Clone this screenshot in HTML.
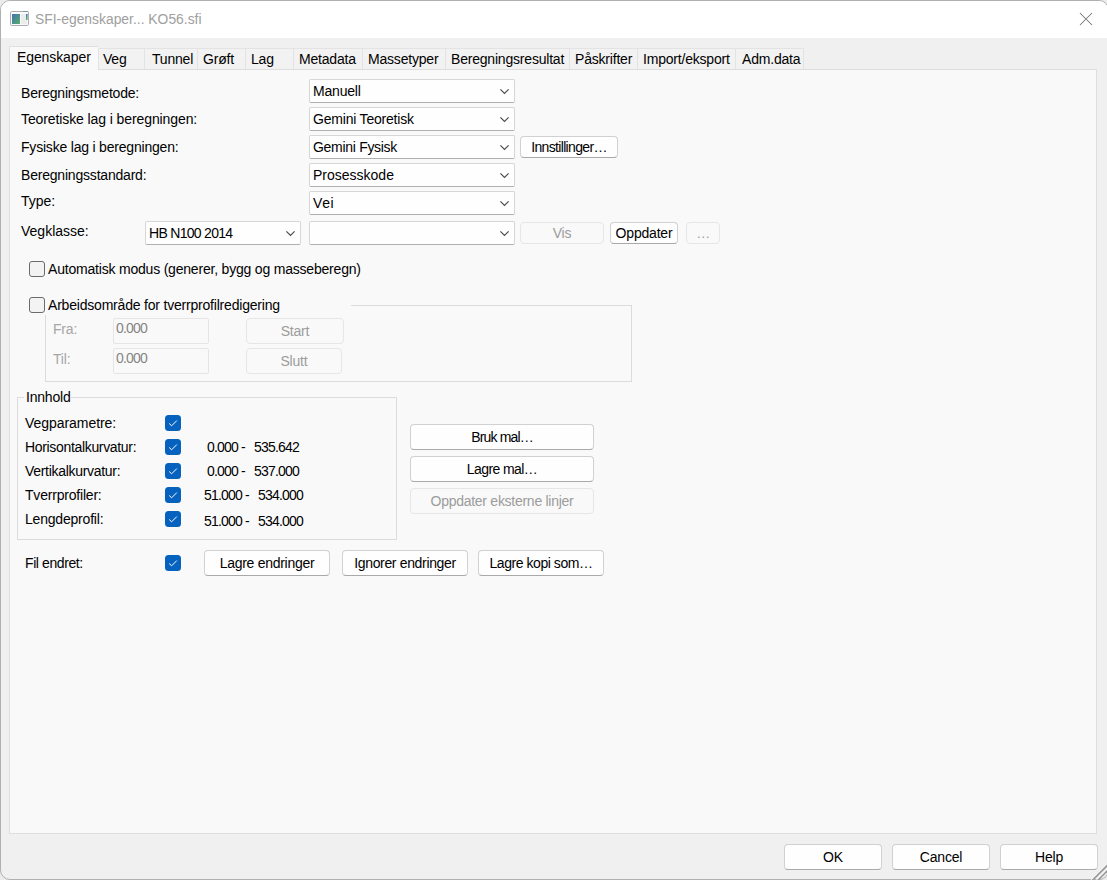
<!DOCTYPE html>
<html><head><meta charset="utf-8">
<style>
html,body{margin:0;padding:0;width:1107px;height:880px;overflow:hidden;background:#ececec;}
*{box-sizing:border-box;}
.win{position:absolute;left:0;top:0;width:1109px;height:880px;background:#f0f0f0;border:1px solid #b0b0b0;border-radius:10px;overflow:hidden;}
.tb{position:absolute;left:0;top:0;width:1109px;height:37px;background:#fff;}
.a{position:absolute;}
.t{position:absolute;font-family:"Liberation Sans",sans-serif;font-size:14px;line-height:16px;letter-spacing:-0.2px;white-space:nowrap;color:#000;}
.g{color:#9c9c9c;}
.panel{position:absolute;left:9px;top:69px;width:1088px;height:765px;background:#f9f9f9;border:1px solid #dedede;}
.tab{position:absolute;top:48px;height:21px;background:#f2f2f2;border:1px solid #e3e3e3;border-bottom:none;}
.seltab{position:absolute;left:9px;top:46px;width:89px;height:24px;background:#f9f9f9;border:1px solid #e0e0e0;border-right:none;border-bottom:none;}
.combo{position:absolute;height:24px;background:#fefefe;border:1px solid #d6d6d6;border-bottom-color:#b0b0b0;border-radius:2px;}
.chev{position:absolute;width:10px;height:6px;}
.btn{position:absolute;background:#fefefe;border:1px solid #d1d1d1;border-bottom-color:#a9a9a9;border-radius:4px;}
.btnd{position:absolute;background:#f9f9f9;border:1px solid #e6e6e6;border-radius:4px;}
.cb{position:absolute;width:16px;height:16px;border:1px solid #6b6b6b;border-radius:3px;background:#f3f3f3;}
.cbc{position:absolute;width:16px;height:16px;border-radius:3px;background:#0a5fc2;}
.edit{position:absolute;background:#f9f9f9;border:1px solid #e5e5e5;border-radius:2px;}
.gl{position:absolute;background:#dcdcdc;}
</style></head><body>
<div class="win">
  <div class="tb"></div>
</div>

<!-- title bar -->
<svg class="a" style="left:10px;top:11px" width="19" height="15" viewBox="0 0 19 15">
  <defs><linearGradient id="ig" x1="0" y1="0" x2="1" y2="1"><stop offset="0" stop-color="#4670b2"/><stop offset="0.5" stop-color="#4b8f90"/><stop offset="1" stop-color="#5bb066"/></linearGradient>
  <linearGradient id="ib" x1="0" y1="0" x2="0" y2="1"><stop offset="0" stop-color="#4a72b8"/><stop offset="1" stop-color="#62b46a"/></linearGradient></defs>
  <rect x="0.5" y="0.5" width="18" height="14" rx="1.2" fill="#fafafa" stroke="#a9aeb5"/>
  <rect x="13" y="0" width="5" height="1" fill="#8a9099"/>
  <rect x="2" y="3" width="8" height="10" fill="url(#ig)"/>
  <rect x="11" y="3" width="6" height="10" fill="#ececec"/>
  <rect x="16" y="3" width="1.6" height="6" fill="url(#ib)"/>
</svg>
<div class="t" style="left:35px;top:11px;font-size:15.5px;letter-spacing:0;color:#a0a0a0;transform:scaleX(0.895);transform-origin:0 0">SFI-egenskaper... KO56.sfi</div>
<svg class="a" style="left:1079px;top:12px" width="14" height="14" viewBox="0 0 14 14">
  <path d="M1 1L13 13M13 1L1 13" stroke="#777777" stroke-width="1.05"/>
</svg>

<!-- tabs -->
<div class="panel"></div>
<div class="tab" style="left:98px;width:47px"></div>
<div class="tab" style="left:144px;width:54px"></div>
<div class="tab" style="left:197px;width:49px"></div>
<div class="tab" style="left:245px;width:49px"></div>
<div class="tab" style="left:293px;width:70px"></div>
<div class="tab" style="left:362px;width:84px"></div>
<div class="tab" style="left:445px;width:125px"></div>
<div class="tab" style="left:569px;width:69px"></div>
<div class="tab" style="left:637px;width:99px"></div>
<div class="tab" style="left:735px;width:69px"></div>
<div class="seltab"></div>
<div class="t" style="left:17px;top:49px;letter-spacing:-0.1px">Egenskaper</div>
<div class="t" style="left:103px;top:51px">Veg</div>
<div class="t" style="left:152px;top:51px">Tunnel</div>
<div class="t" style="left:203px;top:51px">Grøft</div>
<div class="t" style="left:251px;top:51px">Lag</div>
<div class="t" style="left:299px;top:51px">Metadata</div>
<div class="t" style="left:368px;top:51px">Massetyper</div>
<div class="t" style="left:451px;top:51px">Beregningsresultat</div>
<div class="t" style="left:575px;top:51px">Påskrifter</div>
<div class="t" style="left:643px;top:51px">Import/eksport</div>
<div class="t" style="left:742px;top:51px">Adm.data</div>

<div class="t" style="left:21px;top:85px">Beregningsmetode:</div>
<div class="t" style="left:21px;top:111px;letter-spacing:-0.1px">Teoretiske lag i beregningen:</div>
<div class="t" style="left:21px;top:139px">Fysiske lag i beregningen:</div>
<div class="t" style="left:21px;top:167px">Beregningsstandard:</div>
<div class="t" style="left:21px;top:193px;letter-spacing:0px">Type:</div>
<div class="t" style="left:21px;top:223px;letter-spacing:0px">Vegklasse:</div>
<div class="combo" style="left:309px;top:79px;width:206px"></div>
<div class="t" style="left:313px;top:83px">Manuell</div>
<svg class="chev" style="left:500px;top:89px" width="10" height="6" viewBox="0 0 10 6"><path d="M0.4 0.4L4.5 4.5L8.6 0.4" fill="none" stroke="#4a4a4a" stroke-width="1.15"/></svg>

<div class="combo" style="left:309px;top:107px;width:206px"></div>
<div class="t" style="left:313px;top:111px">Gemini Teoretisk</div>
<svg class="chev" style="left:500px;top:117px" width="10" height="6" viewBox="0 0 10 6"><path d="M0.4 0.4L4.5 4.5L8.6 0.4" fill="none" stroke="#4a4a4a" stroke-width="1.15"/></svg>

<div class="combo" style="left:309px;top:135px;width:206px"></div>
<div class="t" style="left:313px;top:139px;letter-spacing:-0.3px">Gemini Fysisk</div>
<svg class="chev" style="left:500px;top:145px" width="10" height="6" viewBox="0 0 10 6"><path d="M0.4 0.4L4.5 4.5L8.6 0.4" fill="none" stroke="#4a4a4a" stroke-width="1.15"/></svg>

<div class="combo" style="left:309px;top:163px;width:206px"></div>
<div class="t" style="left:313px;top:167px;letter-spacing:0px">Prosesskode</div>
<svg class="chev" style="left:500px;top:173px" width="10" height="6" viewBox="0 0 10 6"><path d="M0.4 0.4L4.5 4.5L8.6 0.4" fill="none" stroke="#4a4a4a" stroke-width="1.15"/></svg>

<div class="combo" style="left:309px;top:191px;width:206px"></div>
<div class="t" style="left:313px;top:195px;letter-spacing:0.6px">Vei</div>
<svg class="chev" style="left:500px;top:201px" width="10" height="6" viewBox="0 0 10 6"><path d="M0.4 0.4L4.5 4.5L8.6 0.4" fill="none" stroke="#4a4a4a" stroke-width="1.15"/></svg>

<div class="combo" style="left:309px;top:221px;width:206px"></div>
<svg class="chev" style="left:500px;top:231px" width="10" height="6" viewBox="0 0 10 6"><path d="M0.4 0.4L4.5 4.5L8.6 0.4" fill="none" stroke="#4a4a4a" stroke-width="1.15"/></svg>

<div class="combo" style="left:145px;top:221px;width:156px"></div>
<div class="t" style="left:149px;top:225px;letter-spacing:-0.7px">HB N100 2014</div>
<svg class="chev" style="left:286px;top:231px" width="10" height="6" viewBox="0 0 10 6"><path d="M0.4 0.4L4.5 4.5L8.6 0.4" fill="none" stroke="#4a4a4a" stroke-width="1.15"/></svg>

<div class="btn" style="left:520px;top:136px;width:98px;height:22px"></div>
<div class="t" style="left:520px;top:139px;width:98px;text-align:center;letter-spacing:-0.65px">Innstillinger…</div>

<div class="btnd" style="left:520px;top:222px;width:84px;height:22px"></div>
<div class="t g" style="left:520px;top:225px;width:84px;text-align:center">Vis</div>

<div class="btn" style="left:610px;top:222px;width:68px;height:22px"></div>
<div class="t" style="left:610px;top:225px;width:68px;text-align:center">Oppdater</div>

<div class="btnd" style="left:686px;top:222px;width:34px;height:22px"></div>
<div class="t g" style="left:686px;top:225px;width:34px;text-align:center;letter-spacing:-0.5px">…</div>

<div class="cb" style="left:29px;top:261px"></div>
<div class="t" style="left:48px;top:261px">Automatisk modus (generer, bygg og masseberegn)</div>
<div class="a" style="left:45px;top:305px;width:587px;height:77px;border:1px solid #dcdcdc;"></div>
<div class="a" style="left:29px;top:296px;width:322px;height:19px;background:#f9f9f9"></div>
<div class="cb" style="left:29px;top:297px"></div>
<div class="t" style="left:48px;top:297px">Arbeidsområde for tverrprofilredigering</div>
<div class="t" style="left:53px;top:321px;color:#a6a6a6">Fra:</div>
<div class="t" style="left:53px;top:351px;color:#a6a6a6">Til:</div>
<div class="edit" style="left:113px;top:318px;width:96px;height:26px"></div>
<div class="edit" style="left:113px;top:348px;width:96px;height:26px"></div>
<div class="t" style="left:116px;top:320px;color:#858585;letter-spacing:-0.8px">0.000</div>
<div class="t" style="left:116px;top:350px;color:#858585;letter-spacing:-0.8px">0.000</div>
<div class="btnd" style="left:246px;top:318px;width:98px;height:26px"></div>
<div class="t g" style="left:246px;top:323px;width:98px;text-align:center">Start</div>

<div class="btnd" style="left:246px;top:348px;width:96px;height:26px"></div>
<div class="t g" style="left:246px;top:353px;width:96px;text-align:center">Slutt</div>

<div class="a" style="left:17px;top:397px;width:380px;height:143px;border:1px solid #dcdcdc;"></div>
<div class="a" style="left:24px;top:390px;width:47px;height:14px;background:#f9f9f9"></div>
<div class="t" style="left:26px;top:389px">Innhold</div>
<div class="t" style="left:25px;top:415px;letter-spacing:-0.05px">Vegparametre:</div>
<svg class="a" style="left:165px;top:415px" width="16" height="16" viewBox="0 0 16 16"><rect width="16" height="16" rx="3.5" fill="#0562be"/><path d="M4.2 8.5L6.6 10.8L11.8 5.6" fill="none" stroke="#fff" stroke-width="1"/></svg>
<div class="t" style="left:25px;top:439px;letter-spacing:-0.33px">Horisontalkurvatur:</div>
<svg class="a" style="left:165px;top:439px" width="16" height="16" viewBox="0 0 16 16"><rect width="16" height="16" rx="3.5" fill="#0562be"/><path d="M4.2 8.5L6.6 10.8L11.8 5.6" fill="none" stroke="#fff" stroke-width="1"/></svg>
<div class="t" style="left:25px;top:463px;letter-spacing:-0.3px">Vertikalkurvatur:</div>
<svg class="a" style="left:165px;top:463px" width="16" height="16" viewBox="0 0 16 16"><rect width="16" height="16" rx="3.5" fill="#0562be"/><path d="M4.2 8.5L6.6 10.8L11.8 5.6" fill="none" stroke="#fff" stroke-width="1"/></svg>
<div class="t" style="left:25px;top:487px">Tverrprofiler:</div>
<svg class="a" style="left:165px;top:487px" width="16" height="16" viewBox="0 0 16 16"><rect width="16" height="16" rx="3.5" fill="#0562be"/><path d="M4.2 8.5L6.6 10.8L11.8 5.6" fill="none" stroke="#fff" stroke-width="1"/></svg>
<div class="t" style="left:25px;top:511px">Lengdeprofil:</div>
<svg class="a" style="left:165px;top:511px" width="16" height="16" viewBox="0 0 16 16"><rect width="16" height="16" rx="3.5" fill="#0562be"/><path d="M4.2 8.5L6.6 10.8L11.8 5.6" fill="none" stroke="#fff" stroke-width="1"/></svg>
<div class="t" style="left:207px;top:439px;letter-spacing:-0.8px">0.000 -</div>
<div class="t" style="left:254px;top:439px;letter-spacing:-0.8px">535.642</div>
<div class="t" style="left:207px;top:463px;letter-spacing:-0.8px">0.000 -</div>
<div class="t" style="left:254px;top:463px;letter-spacing:-0.8px">537.000</div>
<div class="t" style="left:204px;top:487px;letter-spacing:-0.8px">51.000 -</div>
<div class="t" style="left:258px;top:487px;letter-spacing:-0.8px">534.000</div>
<div class="t" style="left:204px;top:513px;letter-spacing:-0.8px">51.000 -</div>
<div class="t" style="left:258px;top:513px;letter-spacing:-0.8px">534.000</div>
<div class="btn" style="left:410px;top:424px;width:184px;height:26px"></div>
<div class="t" style="left:410px;top:429px;width:184px;text-align:center;letter-spacing:-0.85px">Bruk mal…</div>

<div class="btn" style="left:410px;top:456px;width:184px;height:26px"></div>
<div class="t" style="left:410px;top:461px;width:184px;text-align:center;letter-spacing:-0.6px">Lagre mal…</div>

<div class="btnd" style="left:410px;top:488px;width:184px;height:26px"></div>
<div class="t g" style="left:410px;top:493px;width:184px;text-align:center;letter-spacing:-0.27px">Oppdater eksterne linjer</div>

<div class="t" style="left:25px;top:555px;letter-spacing:-0.4px">Fil endret:</div>
<svg class="a" style="left:165px;top:555px" width="16" height="16" viewBox="0 0 16 16"><rect width="16" height="16" rx="3.5" fill="#0562be"/><path d="M4.2 8.5L6.6 10.8L11.8 5.6" fill="none" stroke="#fff" stroke-width="1"/></svg>
<div class="btn" style="left:204px;top:550px;width:126px;height:26px"></div>
<div class="t" style="left:204px;top:555px;width:126px;text-align:center;letter-spacing:-0.29px">Lagre endringer</div>

<div class="btn" style="left:342px;top:550px;width:126px;height:26px"></div>
<div class="t" style="left:342px;top:555px;width:126px;text-align:center;letter-spacing:-0.34px">Ignorer endringer</div>

<div class="btn" style="left:478px;top:550px;width:126px;height:26px"></div>
<div class="t" style="left:478px;top:555px;width:126px;text-align:center;letter-spacing:-0.45px">Lagre kopi som…</div>

<div class="btn" style="left:784px;top:844px;width:98px;height:26px"></div>
<div class="t" style="left:784px;top:849px;width:98px;text-align:center">OK</div>

<div class="btn" style="left:892px;top:844px;width:98px;height:26px"></div>
<div class="t" style="left:892px;top:849px;width:98px;text-align:center">Cancel</div>

<div class="btn" style="left:1000px;top:844px;width:98px;height:26px"></div>
<div class="t" style="left:1000px;top:849px;width:98px;text-align:center">Help</div>

<svg class="a" style="left:1087px;top:860px" width="20" height="20" viewBox="0 0 20 20">
<path d="M4.0 20.3L20.5 3.8" stroke="#ffffff" stroke-width="1.1"/>
<path d="M5.4 20.3L20.5 5.2" stroke="#9a9a9a" stroke-width="1.7"/>
<path d="M9.4 20.3L20.5 9.2" stroke="#ffffff" stroke-width="1.1"/>
<path d="M10.8 20.3L20.5 10.6" stroke="#9a9a9a" stroke-width="1.7"/>
</svg>
</body></html>
